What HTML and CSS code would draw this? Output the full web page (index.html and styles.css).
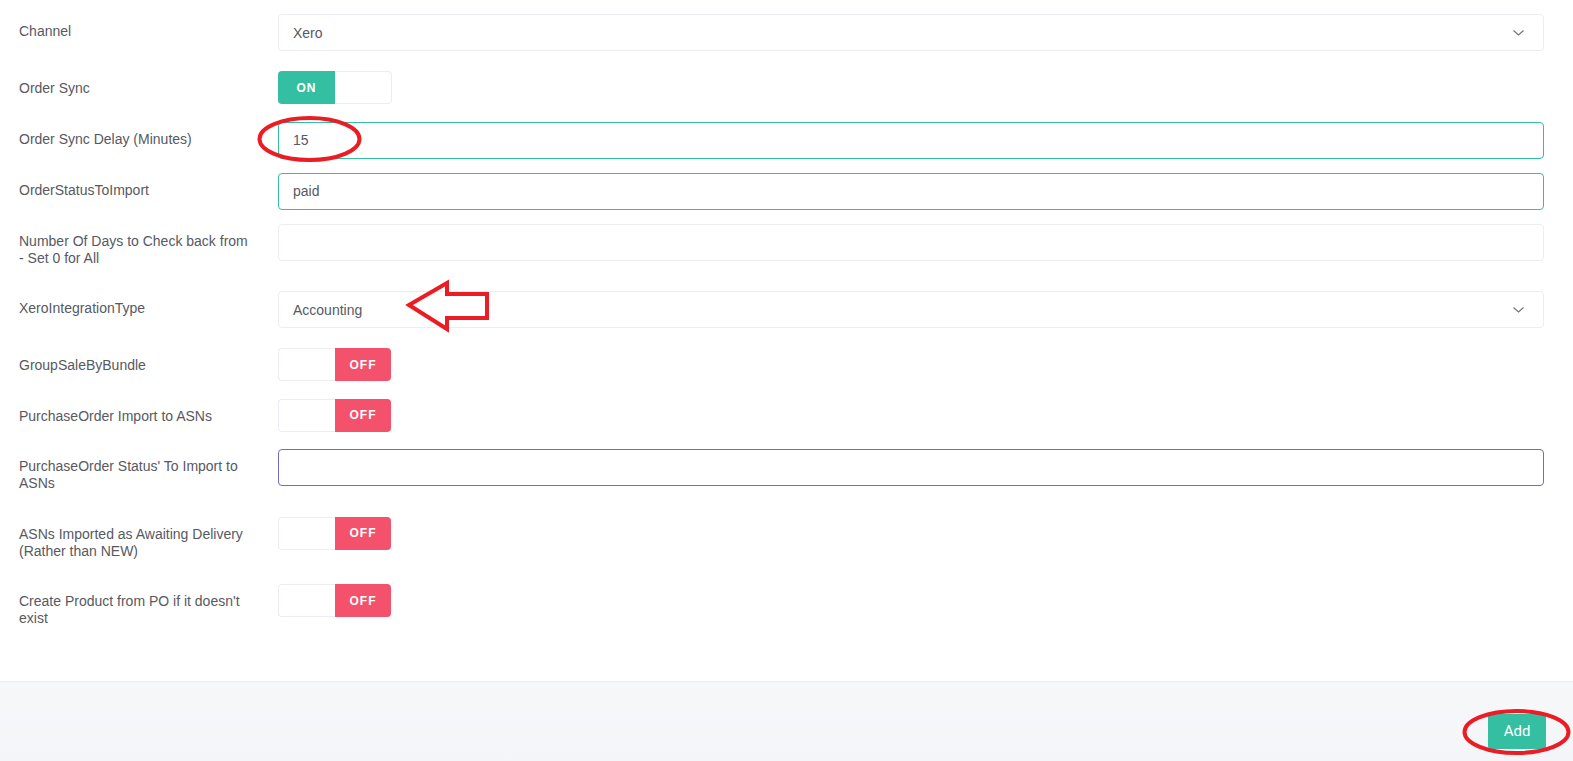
FILE: index.html
```html
<!DOCTYPE html>
<html>
<head>
<meta charset="utf-8">
<link rel="stylesheet" href="styles.css">
</head>
<body>
<div class="page">
  <form class="form">
    <div class="row row-select">
      <label class="lbl">Channel</label>
      <div class="ctl">
        <div class="select"><span>Xero</span>
          <svg class="chev" width="11" height="6" viewBox="0 0 11 6"><polyline points="0.5,0.5 5.5,5 10.5,0.5" fill="none" stroke="#6f727d" stroke-width="1.1"/></svg>
        </div>
      </div>
    </div>
    <div class="row">
      <label class="lbl">Order Sync</label>
      <div class="ctl"><div class="toggle"><span class="t-on">ON</span><span class="t-blank t-blank-r"></span></div></div>
    </div>
    <div class="row">
      <label class="lbl">Order Sync Delay (Minutes)</label>
      <div class="ctl"><div class="input valid">15</div></div>
    </div>
    <div class="row">
      <label class="lbl">OrderStatusToImport</label>
      <div class="ctl"><div class="input valid">paid</div></div>
    </div>
    <div class="row">
      <label class="lbl">Number Of Days to Check back from - Set 0 for All</label>
      <div class="ctl"><div class="input"></div></div>
    </div>
    <div class="row row-select">
      <label class="lbl">XeroIntegrationType</label>
      <div class="ctl">
        <div class="select"><span>Accounting</span>
          <svg class="chev" width="11" height="6" viewBox="0 0 11 6"><polyline points="0.5,0.5 5.5,5 10.5,0.5" fill="none" stroke="#6f727d" stroke-width="1.1"/></svg>
        </div>
      </div>
    </div>
    <div class="row">
      <label class="lbl">GroupSaleByBundle</label>
      <div class="ctl"><div class="toggle"><span class="t-blank t-blank-l"></span><span class="t-off">OFF</span></div></div>
    </div>
    <div class="row">
      <label class="lbl">PurchaseOrder Import to ASNs</label>
      <div class="ctl"><div class="toggle"><span class="t-blank t-blank-l"></span><span class="t-off">OFF</span></div></div>
    </div>
    <div class="row">
      <label class="lbl">PurchaseOrder Status' To Import to ASNs</label>
      <div class="ctl"><div class="input focus"></div></div>
    </div>
    <div class="row">
      <label class="lbl">ASNs Imported as Awaiting Delivery (Rather than NEW)</label>
      <div class="ctl"><div class="toggle"><span class="t-blank t-blank-l"></span><span class="t-off">OFF</span></div></div>
    </div>
    <div class="row">
      <label class="lbl">Create Product from PO if it doesn't exist</label>
      <div class="ctl"><div class="toggle"><span class="t-blank t-blank-l"></span><span class="t-off">OFF</span></div></div>
    </div>
  </form>
  <div class="footer">
    <button class="btn-add" type="button">Add</button>
  </div>
  <svg class="marks" width="1573" height="761" viewBox="0 0 1573 761">
    <ellipse cx="309.5" cy="139" rx="50" ry="21" fill="none" stroke="#ec1c24" stroke-width="4"/>
    <polygon points="409,305 447,283 447,294 487,294 487,318 447,318 447,329" fill="none" stroke="#ec1c24" stroke-width="4" stroke-linejoin="miter"/>
    <ellipse cx="1516.5" cy="732" rx="52" ry="21" fill="none" stroke="#ec1c24" stroke-width="4"/>
  </svg>
</div>
</body>
</html>
```

FILE: styles.css
```css
html, body {
  margin: 0;
  padding: 0;
  background: #ffffff;
}
body {
  font-family: "Liberation Sans", Arial, sans-serif;
  font-size: 14px;
  color: #575962;
}
.page {
  position: relative;
  width: 1573px;
  height: 761px;
  overflow: hidden;
  display: flex;
  flex-direction: column;
}
.form {
  padding: 14px 29px 43px 19px;
}
.row {
  display: flex;
  align-items: flex-start;
  margin-bottom: 14px;
}
.row-select {
  margin-bottom: 20px;
}
.row:last-child {
  margin-bottom: 0;
}
.lbl {
  width: 232px;
  flex: 0 0 232px;
  margin-right: 27px;
  padding: 9px 0 10.5px;
  line-height: 17px;
  color: #575962;
}
.ctl {
  flex: 1;
}
.select, .input {
  box-sizing: border-box;
  height: 37px;
  border: 1px solid #ebedf2;
  border-radius: 4px;
  padding: 0 14px;
  display: flex;
  align-items: center;
  justify-content: space-between;
  color: #575962;
  background: #fff;
}
.input.valid {
  border-color: #34bfa3;
}
.input.focus {
  border-color: #716aca;
}
.chev {
  margin-right: 5px;
  margin-top: 1px;
}
.toggle {
  width: 113px;
  height: 33px;
  display: flex;
}
.toggle span {
  box-sizing: border-box;
  display: flex;
  align-items: center;
  justify-content: center;
  font-weight: bold;
  font-size: 12px;
  letter-spacing: 1px;
  color: #fff;
}
.t-blank {
  flex: 0 0 57px;
  background: #fff;
  border: 1px solid #ebedf2;
}
.t-blank-l {
  border-right: none;
  border-radius: 4px 0 0 4px;
}
.t-blank-r {
  border-left: none;
  border-radius: 0 4px 4px 0;
}
.t-on {
  flex: 0 0 57px;
  background: #34bfa3;
  border-radius: 4px 0 0 4px;
}
.t-off {
  flex: 0 0 56px;
  background: #f4516c;
  border-radius: 0 4px 4px 0;
}
.footer {
  flex: 1;
  background: linear-gradient(#f7f8fa, #f4f5f8);
  border-top: 1px solid #ebedf2;
  display: flex;
  justify-content: flex-end;
  align-items: flex-start;
  padding: 32px 27px 0 0;
}
.btn-add {
  width: 58px;
  height: 35px;
  border: none;
  border-radius: 3px;
  background: #34bfa3;
  color: #fff;
  font-family: Roboto, "Liberation Sans", sans-serif;
  font-size: 15px;
  padding: 0;
}
.marks {
  position: absolute;
  left: 0;
  top: 0;
  pointer-events: none;
}
```
